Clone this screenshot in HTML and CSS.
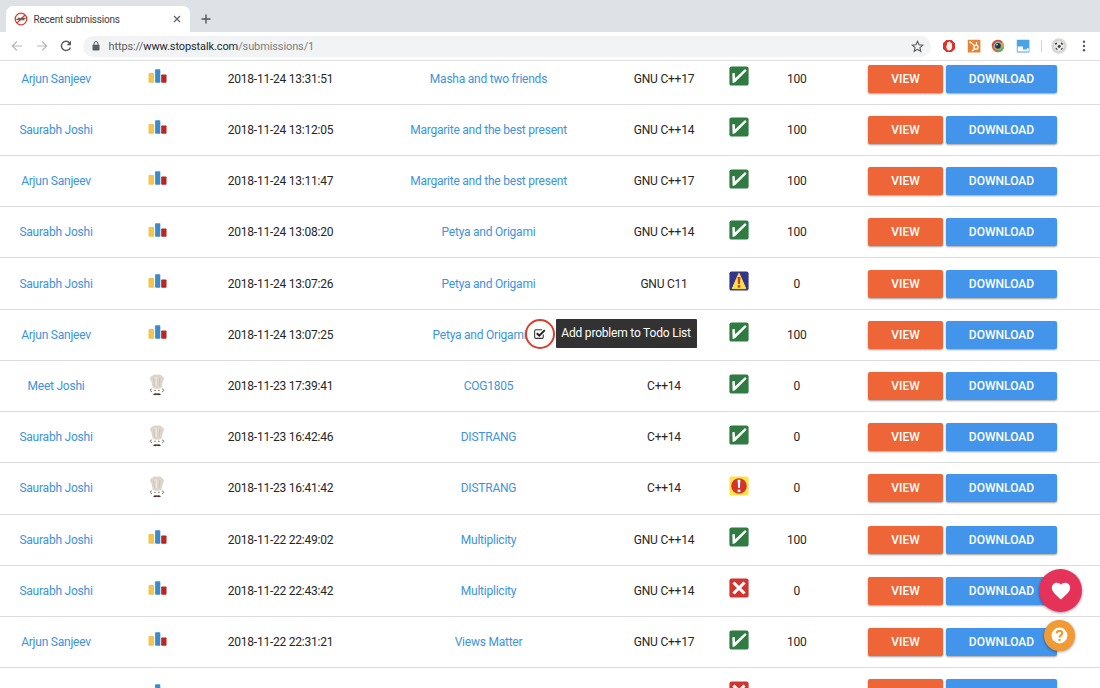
FILE: index.html
```html
<!DOCTYPE html>
<html lang="en">
<head>
<meta charset="utf-8">
<title>Recent submissions</title>
<link rel="stylesheet" href="styles.css">
</head>
<body>
<svg class="defs" width="0" height="0">
  <symbol id="cf" viewBox="0 0 18 14"><rect x="0" y="4" width="5.6" height="9.8" rx=".7" fill="#f2c64c"/><rect x="6.6" y="0.2" width="5.2" height="13.6" rx=".7" fill="#3b8bca"/><rect x="12.7" y="5.6" width="5.3" height="8.2" rx=".7" fill="#b7261f"/></symbol>
  <symbol id="chef" viewBox="0 0 16 22"><path d="M3.800 14 2.300 7C.5 5.500.8 2.800 3 2.100 4.500.3 7 .5 8 .8c2-.8 4.500-.3 5.200 1.400 2.300 1.200 2.100 3.800.6 5L12.500 14Q8 15.500 3.800 14Z" fill="#ded5ca"/><path d="M4.700 4.500 5.600 12M10.800 4 10.300 12" stroke="#cbbfb0" stroke-width=".8" fill="none"/><path d="M7.200 3v9" stroke="#efe9e0" stroke-width="1.200" fill="none"/><path d="M2.800 15Q.8 15 1.200 16.500L3 18M13 15Q15.200 15 14.800 16.500L13 18" stroke="#8a8583" fill="none"/><path d="M6 15.800v1.300M9.900 15.800v1.300" stroke="#666" stroke-width="1.200"/><path d="M4 20.600Q5.500 18.500 8 19.400 10.500 18.500 12 20.600 9.500 21.800 8 20.800 6.500 21.800 4 20.600Z" fill="#4b332d"/></symbol>
  <symbol id="ok" viewBox="0 0 20 20"><rect x=".4" y=".4" width="19.200" height="19.200" rx="2.200" fill="#2f7b41"/><path d="M3.300 7.300 5.700 6.900 6.200 12.200 16.100 3 17.600 4.700 6 16.300 3.600 17Z" fill="#fff"/></symbol>
  <symbol id="warn" viewBox="0 0 20 20"><rect x=".4" y=".4" width="19.200" height="19.200" rx="2.200" fill="#33348a"/><path d="M10 2.200 16.800 17.600H3.200Z" fill="#fce04b" stroke="#fce04b" stroke-linejoin="round"/><path d="M8.600 6h2.800l-.5 7H9.100Z" fill="#d63a2c"/><rect x="8.700" y="14.200" width="2.600" height="2.400" fill="#d63a2c"/></symbol>
  <symbol id="bang" viewBox="0 0 20 20"><rect x=".4" y=".4" width="19.200" height="19.200" rx="2.200" fill="#fbe443"/><circle cx="10" cy="10" r="7.800" fill="#d3352d"/><path d="M8.600 3.800h2.800l-.5 8.300H9.100Z" fill="#fff"/><rect x="8.700" y="13.600" width="2.600" height="2.500" fill="#fff"/></symbol>
  <symbol id="bad" viewBox="0 0 20 20"><rect x=".4" y=".4" width="19.200" height="19.200" rx="2.200" fill="#d23430"/><path d="m4.500 4.500 11 11M15.500 4.500l-11 11" stroke="#fff" stroke-width="3.100"/></symbol>
</svg>

<header class="browser">
  <div class="tabs">
    <div class="tab">
      <svg class="favicon" viewBox="0 0 14 14"><circle cx="7" cy="7" r="5.800" fill="#fff" stroke="#dd3b31" stroke-width="1.300"/><path d="M3 11 11 3" stroke="#dd3b31" stroke-width="1.200"/><path d="M2.300 7.500h2V6.200h1.400v1.500h1.500V6.400h1.500v1.300h1.200V6.200h1.800" fill="none" stroke="#555" stroke-width="1.100"/></svg>
      <span class="tab-title">Recent submissions</span>
      <svg class="tab-close" viewBox="0 0 8 8"><path d="m1 1 6 6M7 1 1 7" stroke="#5b5f63" stroke-width="1.200"/></svg>
    </div>
    <svg class="new-tab" viewBox="0 0 10 10"><path d="M5 .5v9M.5 5h9" stroke="#505458" stroke-width="1.400"/></svg>
  </div>
  <div class="toolbar">
    <div class="nav">
      <svg viewBox="0 0 12 12"><path d="M11 6H1.500M5.800 1.500 1.300 6l4.500 4.500" fill="none" stroke="#b5b7b9" stroke-width="1.200"/></svg>
      <svg viewBox="0 0 12 12"><path d="M1 6h9.500M6.200 1.500 10.700 6l-4.500 4.500" fill="none" stroke="#b5b7b9" stroke-width="1.200"/></svg>
      <svg viewBox="0 0 12 12"><path d="M9.700 3.100A4.600 4.600 0 1 0 10.400 7.400" fill="none" stroke="#55595d" stroke-width="1.400"/><path d="M11 .8v4.400H6.600Z" fill="#55595d"/></svg>
    </div>
    <div class="address">
      <svg class="lock" viewBox="0 0 8 10"><path d="M2 4.200V2.700a2 2 0 0 1 4 0v1.500" fill="none" stroke="#5a5e62"/><rect x=".5" y="3.800" width="7" height="5.700" rx=".8" fill="#5a5e62"/></svg>
      <span class="url"><span class="scheme">https://</span><span class="host">www.stopstalk.com</span>/submissions/1</span>
      <svg class="star" viewBox="0 0 12 12"><path d="m6 1.200 1.400 3.200 3.500.3-2.650 2.300.8 3.400L6 8.600l-3.050 1.800.8-3.400L1.100 4.700l3.500-.3Z" fill="none" stroke="#55595d" stroke-width="1"/></svg>
    </div>
    <div class="extensions">
      <svg viewBox="0 0 14 14"><path d="M4.300 1h5.400L13 4.300v5.400L9.700 13H4.300L1 9.700V4.300Z" fill="#d6342d"/><path d="M4.300 6.500 5 6V3.500h1V3h1v-.4h1V3.500h1V4.300h1v4c0 2-1.200 3.200-3 3.200S4.600 9.800 4.300 8Z" fill="#f6eeee"/></svg>
      <svg viewBox="0 0 14 14"><rect x=".8" y=".8" width="12.600" height="12.600" rx=".5" fill="#e98334"/><path d="m3.200 3 4.200 3.600M9.500 3v3M7.500 9.800 5 12" stroke="#fff" stroke-width="1.200"/><circle cx="9" cy="8.200" r="2" fill="none" stroke="#fff" stroke-width="1.300"/><circle cx="3.300" cy="3.200" r="1" fill="#fff"/></svg>
      <svg viewBox="0 0 14 14"><circle cx="7" cy="7" r="6.200" fill="#e2a13c"/><path d="M.8 7A6.200 6.200 0 0 1 11.400 2.700L7 7Z" fill="#d4473a"/><path d="M.8 7A6.200 6.200 0 0 0 7 13.200V7Z" fill="#d86643"/><path d="M7 13.200A6.200 6.200 0 0 0 13 8.500L7 7Z" fill="#68aa58"/><circle cx="7" cy="6.800" r="4.300" fill="#8fb9b5"/><circle cx="7" cy="6.800" r="2.900" fill="#25343b"/><circle cx="6" cy="5.800" r=".8" fill="#fff"/></svg>
      <svg viewBox="0 0 14 14"><rect x=".8" y=".8" width="12.600" height="12.600" rx=".6" fill="#4aa3e5"/><path d="M1.600 7.500h5.300v3h4V9.200h1.800v3.400H1.600Z" fill="#fff"/></svg>
      <span class="divider"></span>
      <svg class="avatar" viewBox="0 0 16 16"><circle cx="8" cy="8" r="7.700" fill="#d8d8d6"/><circle cx="8" cy="8" r="4.800" fill="#ebebe9"/><path d="m7.200 7.200 2-.3.700 1.900L8.200 10 6.500 9ZM4 5.200l1.700-.8.4 1.700-1.700 1ZM10 4.300l2 1.200-.5 1.600-1.700-1ZM4.500 9.800l1.500.5.5 1.700-1.500-.5ZM10.300 10.300l1.700-.5-.8 1.800-1.400.5Z" fill="#3a3a3a"/></svg>
      <svg class="menu" viewBox="0 0 4 12"><circle cx="2" cy="1.800" r="1.200" fill="#55595d"/><circle cx="2" cy="6" r="1.200" fill="#55595d"/><circle cx="2" cy="10.200" r="1.200" fill="#55595d"/></svg>
    </div>
  </div>
</header>

<main class="page">
  <div class="submissions">
    <div class="row"><a>Arjun Sanjeev</a><svg class="cf"><use href="#cf"/></svg><span>2018-11-24 13:31:51</span><a>Masha and two friends</a><span>GNU C++17</span><svg class="status"><use href="#ok"/></svg><span>100</span><div class="actions"><b class="btn view">VIEW</b><b class="btn download">DOWNLOAD</b></div></div>
    <div class="row"><a>Saurabh Joshi</a><svg class="cf"><use href="#cf"/></svg><span>2018-11-24 13:12:05</span><a>Margarite and the best present</a><span>GNU C++14</span><svg class="status"><use href="#ok"/></svg><span>100</span><div class="actions"><b class="btn view">VIEW</b><b class="btn download">DOWNLOAD</b></div></div>
    <div class="row"><a>Arjun Sanjeev</a><svg class="cf"><use href="#cf"/></svg><span>2018-11-24 13:11:47</span><a>Margarite and the best present</a><span>GNU C++17</span><svg class="status"><use href="#ok"/></svg><span>100</span><div class="actions"><b class="btn view">VIEW</b><b class="btn download">DOWNLOAD</b></div></div>
    <div class="row"><a>Saurabh Joshi</a><svg class="cf"><use href="#cf"/></svg><span>2018-11-24 13:08:20</span><a>Petya and Origami</a><span>GNU C++14</span><svg class="status"><use href="#ok"/></svg><span>100</span><div class="actions"><b class="btn view">VIEW</b><b class="btn download">DOWNLOAD</b></div></div>
    <div class="row"><a>Saurabh Joshi</a><svg class="cf"><use href="#cf"/></svg><span>2018-11-24 13:07:26</span><a>Petya and Origami</a><span>GNU C11</span><svg class="status"><use href="#warn"/></svg><span>0</span><div class="actions"><b class="btn view">VIEW</b><b class="btn download">DOWNLOAD</b></div></div>
    <div class="row"><a>Arjun Sanjeev</a><svg class="cf"><use href="#cf"/></svg><span>2018-11-24 13:07:25</span>
      <div class="problem"><a>Petya and Origami</a>
        <div class="todo"><span class="todo-ring"><svg viewBox="0 0 12 12"><path d="M9.500 7v2.300q0 1.200-1.200 1.200H2.700q-1.200 0-1.200-1.200V3.700q0-1.200 1.200-1.200h5.600" fill="none" stroke="#333"/><path d="m3.500 5.700 2.300 2.300L10.900 2.900" fill="none" stroke="#222" stroke-width="1.900"/></svg></span><span class="tooltip">Add problem to Todo List</span></div>
      </div>
      <span></span><svg class="status"><use href="#ok"/></svg><span>100</span><div class="actions"><b class="btn view">VIEW</b><b class="btn download">DOWNLOAD</b></div></div>
    <div class="row"><a>Meet Joshi</a><svg class="chef"><use href="#chef"/></svg><span>2018-11-23 17:39:41</span><a>COG1805</a><span>C++14</span><svg class="status"><use href="#ok"/></svg><span>0</span><div class="actions"><b class="btn view">VIEW</b><b class="btn download">DOWNLOAD</b></div></div>
    <div class="row"><a>Saurabh Joshi</a><svg class="chef"><use href="#chef"/></svg><span>2018-11-23 16:42:46</span><a>DISTRANG</a><span>C++14</span><svg class="status"><use href="#ok"/></svg><span>0</span><div class="actions"><b class="btn view">VIEW</b><b class="btn download">DOWNLOAD</b></div></div>
    <div class="row"><a>Saurabh Joshi</a><svg class="chef"><use href="#chef"/></svg><span>2018-11-23 16:41:42</span><a>DISTRANG</a><span>C++14</span><svg class="status"><use href="#bang"/></svg><span>0</span><div class="actions"><b class="btn view">VIEW</b><b class="btn download">DOWNLOAD</b></div></div>
    <div class="row"><a>Saurabh Joshi</a><svg class="cf"><use href="#cf"/></svg><span>2018-11-22 22:49:02</span><a>Multiplicity</a><span>GNU C++14</span><svg class="status"><use href="#ok"/></svg><span>100</span><div class="actions"><b class="btn view">VIEW</b><b class="btn download">DOWNLOAD</b></div></div>
    <div class="row"><a>Saurabh Joshi</a><svg class="cf"><use href="#cf"/></svg><span>2018-11-22 22:43:42</span><a>Multiplicity</a><span>GNU C++14</span><svg class="status"><use href="#bad"/></svg><span>0</span><div class="actions"><b class="btn view">VIEW</b><b class="btn download">DOWNLOAD</b></div></div>
    <div class="row"><a>Arjun Sanjeev</a><svg class="cf"><use href="#cf"/></svg><span>2018-11-22 22:31:21</span><a>Views Matter</a><span>GNU C++17</span><svg class="status"><use href="#ok"/></svg><span>100</span><div class="actions"><b class="btn view">VIEW</b><b class="btn download">DOWNLOAD</b></div></div>
    <div class="row"><span></span><svg class="cf"><use href="#cf"/></svg><span></span><span></span><span></span><svg class="status"><use href="#bad"/></svg><span></span><div class="actions"><b class="btn view"></b><b class="btn download"></b></div></div>
  </div>
</main>

<div class="fab heart"><svg viewBox="0 0 24 24"><path d="m12 21.400-1.500-1.300C5.400 15.400 2 12.300 2 8.500 2 5.400 4.400 3 7.500 3c1.700 0 3.400.8 4.500 2.100C13.100 3.800 14.800 3 16.500 3 19.600 3 22 5.400 22 8.500c0 3.800-3.400 6.900-8.600 11.500Z" fill="#fff"/></svg></div>
<div class="fab help"><svg viewBox="0 0 24 24"><path d="M12 2a10 10 0 1 0 0 20 10 10 0 0 0 0-20Z" fill="#fff"/><path d="M8.500 9.400C8.500 7.300 10 6.200 12 6.200s3.500 1.200 3.500 3.100c0 2.300-3.500 2.700-3.500 5.200" fill="none" stroke="#f29b34" stroke-width="2.700"/><rect x="10.600" y="16.200" width="2.800" height="2.700" fill="#f29b34"/></svg></div>
</body>
</html>
```
FILE: styles.css
```css
* { box-sizing: border-box; }
body {
  margin: 0;
  width: 1100px;
  height: 688px;
  overflow: hidden;
  display: flex;
  flex-direction: column;
  background: #fff;
  font-family: Roboto, "Liberation Sans", sans-serif;
  font-size: 12px;
  letter-spacing: -.23px;
  color: #262626;
}
svg { display: block; }
.defs { position: absolute; }

/* Browser chrome */
.browser { flex: none; height: 61px; border-bottom: 1px solid #dcdddf; background: #fff; }
.tabs { display: flex; align-items: flex-end; height: 32px; padding-left: 6px; background: #dee1e6; }
.tab {
  display: flex;
  align-items: center;
  width: 184px;
  height: 26px;
  padding: 0 9px 0 8px;
  border-radius: 7px 7px 0 0;
  background: #fff;
}
.favicon { width: 14px; height: 14px; }
.tab-title { flex: 1; margin-left: 5.500px; font-size: 10px; letter-spacing: -.2px; color: #3c4043; }
.tab-close { width: 8px; height: 8px; }
.new-tab { width: 10px; height: 10px; margin: 0 0 8px 11px; }
.toolbar { display: flex; align-items: center; height: 28px; padding-left: 11px; }
.nav { display: flex; gap: 12.500px; width: 72px; }
.nav svg { width: 12px; height: 12px; }
.address {
  display: flex;
  align-items: center;
  width: 848px;
  height: 21px;
  padding: 0 7px 0 9px;
  border-radius: 11px;
  background: #f1f3f4;
}
.lock { width: 8px; height: 10px; }
.url { flex: 1; margin-left: 8.500px; font-size: 11px; letter-spacing: -.11px; color: #7b7f83; }
.scheme { color: #5c6064; }
.host { color: #25282b; }
.star { width: 13px; height: 13px; }
.extensions { display: flex; align-items: center; margin-left: 11px; }
.extensions svg { width: 14px; height: 14px; margin-right: 10.500px; }
.divider { width: 1px; height: 12px; margin: 0 9px 0 1px; background: #d0d2d4; }
.extensions .avatar { width: 16px; height: 16px; margin-right: 14.500px; }
.extensions .menu { width: 4px; height: 12px; margin-right: 0; }

/* Submission table */
.page { flex: 1; min-height: 0; overflow: hidden; }
.submissions { margin-top: -7.500px; }
.row {
  display: grid;
  grid-template-columns: 112px 90px 157px 259px 92px 59.500px 54.500px 1fr;
  align-items: center;
  justify-items: center;
  height: 51.240px;
  border-bottom: 1px solid #dcdcdc;
  white-space: nowrap;
}
.row a { color: #3d93dc; }
.cf { width: 19px; height: 14px; margin-bottom: 5.500px; }
.chef { width: 16px; height: 22px; margin-bottom: 3px; }
.status { width: 20px; height: 20px; margin: 0 1px 5px 0; }
.actions { display: flex; gap: 3px; justify-self: start; padding-left: 44px; }
.btn {
  display: flex;
  align-items: center;
  justify-content: center;
  height: 28px;
  border-radius: 2px;
  color: #fff;
  font-size: 12px;
  font-weight: 500;
  letter-spacing: .02px;
  box-shadow: 0 1px 2px rgba(0, 0, 0, .38);
}
.view { width: 75px; background: #ee6537; }
.download { width: 111px; background: #4395ec; }

/* Hovered problem with its to-do action */
.problem { position: relative; margin-right: 18px; }
.todo { position: absolute; left: 92px; top: -9px; display: flex; align-items: center; gap: 1px; }
.todo-ring {
  display: flex;
  align-items: center;
  justify-content: center;
  width: 30px;
  height: 30px;
  border: 2px solid #d5402f;
  border-radius: 50%;
}
.todo-ring svg { width: 13px; height: 13px; }
.tooltip {
  width: 141px;
  height: 29px;
  border-radius: 1px;
  background: #323232;
  color: #fff;
  font-size: 12px;
  letter-spacing: -.2px;
  line-height: 29px;
  text-align: center;
}

/* Floating buttons */
.fab { position: absolute; display: flex; align-items: center; justify-content: center; border-radius: 50%; box-shadow: 0 1px 3px rgba(0, 0, 0, .4); }
.heart { left: 1039px; top: 569px; width: 43px; height: 43px; background: #e43259; }
.heart svg { width: 22px; height: 22px; }
.help { left: 1044px; top: 620px; width: 31px; height: 31px; background: #f29b34; }
.help svg { width: 19px; height: 19px; }
```
